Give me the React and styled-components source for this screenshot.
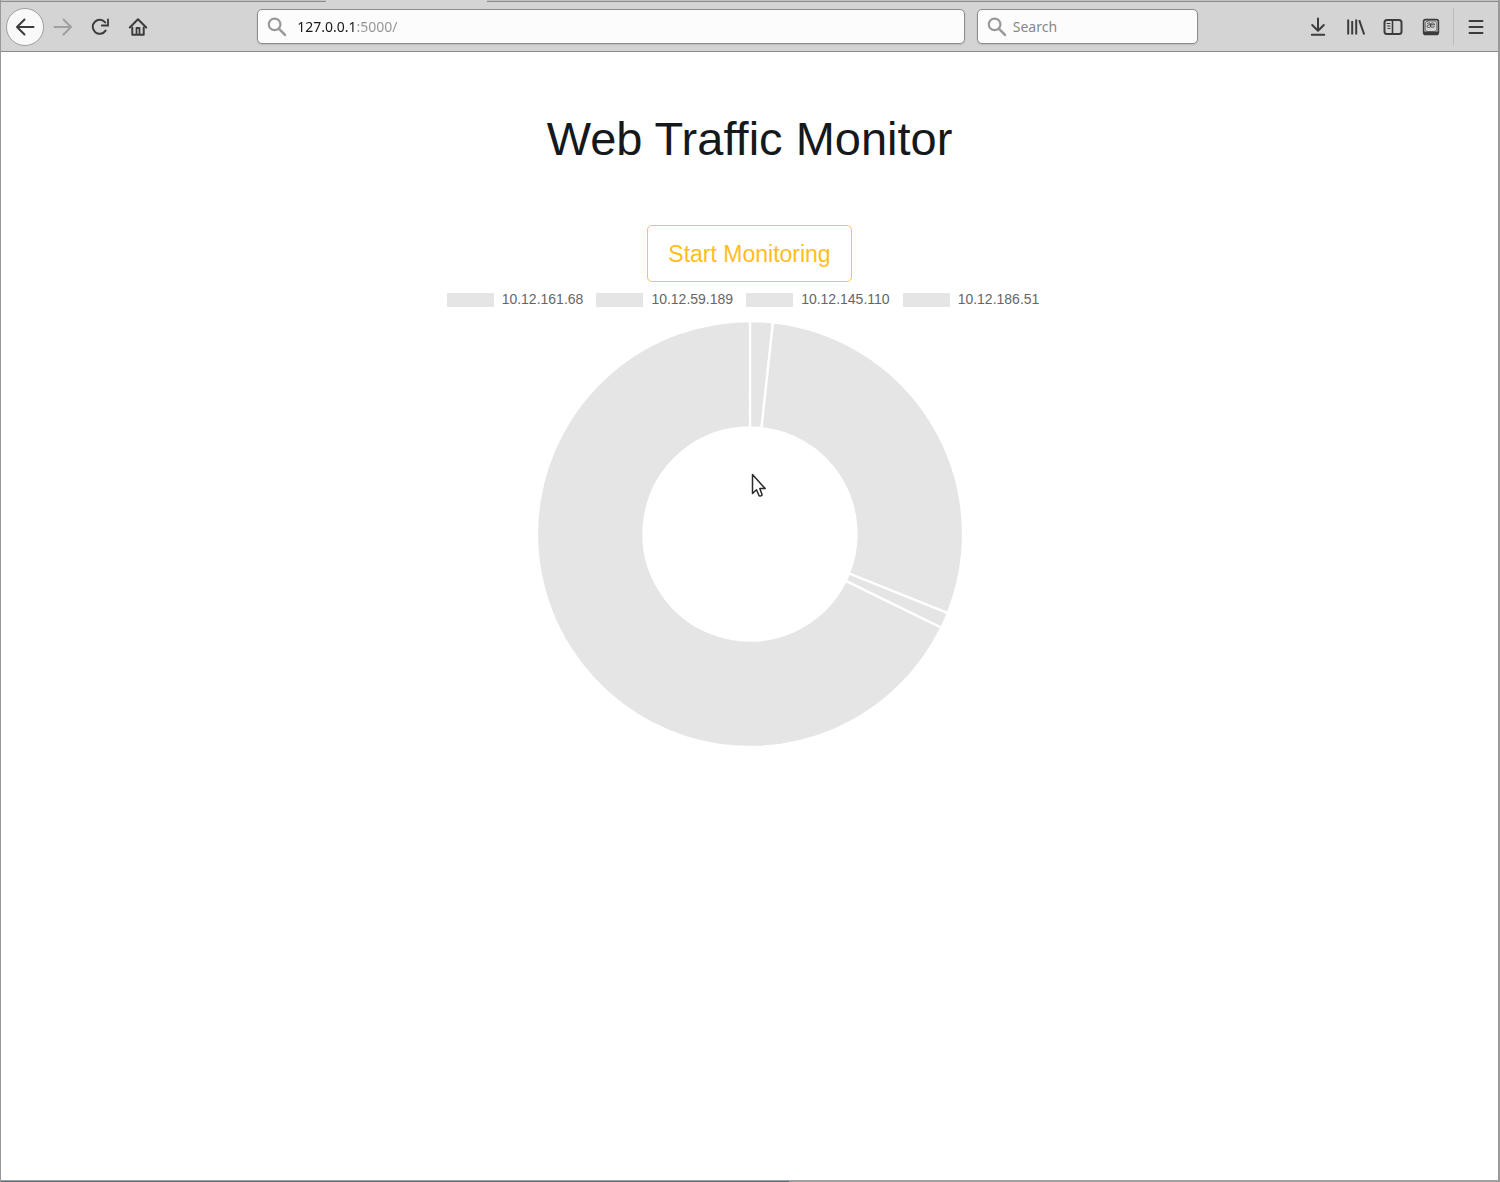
import React from "react";
import styled, { createGlobalStyle } from "styled-components";

const GlobalStyle = createGlobalStyle`
  * { box-sizing: border-box; }
  body { margin: 0; background: #fff; }
`;

const Window = styled.div`
  display: flex;
  flex-direction: column;
  min-height: 100vh;
  border-left: 1px solid #999;
  border-right: 2px solid #999;
  font-family: "Noto Sans", "Open Sans", sans-serif;
`;

const TabStrip = styled.div`
  display: flex;
  height: 2px;
  background: #d4d4d4;
`;

const TabEdge = styled.div`
  flex: ${(p) => (p.$width ? `0 0 ${p.$width}px` : "1")};
  background: ${(p) => (p.$active ? "#d4d4d4" : "#c4c4c4")};
  border-bottom: 1px solid ${(p) => (p.$active ? "#d4d4d4" : "#8c8c8c")};
`;

const Toolbar = styled.header`
  display: flex;
  align-items: center;
  height: 50px;
  padding: 0 4px 0 5px;
  background: #d4d4d4;
  border-bottom: 1px solid #8a8a8a;
`;

const ToolButton = styled.button`
  display: grid;
  place-items: center;
  flex: none;
  width: ${(p) => (p.$narrow ? 37 : 38)}px;
  height: 38px;
  padding: 0;
  border: 1px solid ${(p) => (p.$round ? "#a0a0a0" : "transparent")};
  border-radius: 50%;
  background: ${(p) => (p.$round ? "#f9f9f9" : "transparent")};
  color: ${(p) => (p.disabled ? "#a0a0a0" : "#3c3c3c")};
`;

const Spacer = styled.div`
  flex: 5 1 0;
`;

const Field = styled.label`
  display: flex;
  align-items: center;
  gap: ${(p) => (p.$width ? 6 : 10)}px;
  flex: ${(p) => (p.$width ? `0 0 ${p.$width}px` : "34 1 0")};
  min-width: 0;
  height: 35px;
  padding: 0 8px 0 9px;
  margin-right: ${(p) => (p.$width ? 0 : 12)}px;
  border: 1px solid #8c8c8c;
  border-radius: 5px;
  background: #fcfcfc;
  box-shadow: 0 1px 2px rgba(0, 0, 0, 0.12);
  color: #999;
`;

const FieldInput = styled.input`
  flex: 1;
  min-width: 0;
  height: 24px;
  padding: 0;
  border: 0;
  outline: 0;
  background: transparent;
  font: 14px/24px "Noto Sans", "Open Sans", sans-serif;
  color: #888;
  &::placeholder { color: #888; opacity: 1; }
`;

const AddressInput = styled(FieldInput)`
  background: linear-gradient(to right, #181818 59px, #929292 59px);
  background-clip: text;
  -webkit-text-fill-color: transparent;
`;

const Divider = styled.div`
  width: 1px;
  height: 37px;
  margin: 0 3px 0 4px;
  background: #bcbcbc;
`;

const Page = styled.main`
  display: flex;
  flex-direction: column;
  align-items: center;
  flex: 1;
  padding-top: 59px;
  background: #fff;
  font-family: "Liberation Sans", Arial, sans-serif;
`;

const Title = styled.h1`
  margin: 0;
  font-size: 47px;
  line-height: 56px;
  font-weight: 400;
  color: #16191c;
`;

const StartButton = styled.button`
  height: 57px;
  margin-top: 58px;
  padding: 0 20px;
  border: 1px solid #ffc04d;
  border-radius: 5px;
  background: #fff;
  color: #ffbe1a;
  font: 23px/34px "Liberation Sans", Arial, sans-serif;
`;

const Legend = styled.ul`
  display: flex;
  margin: 9px 0 0;
  padding: 0;
  list-style: none;
`;

const LegendItem = styled.li`
  display: flex;
  align-items: flex-start;
  gap: 8px;
  height: 18px;
  margin-right: 13px;
  font-size: 14px;
  line-height: 16px;
  color: #666;
`;

const Swatch = styled.span`
  width: 47px;
  height: 14px;
  margin-top: 2px;
  background: #e5e5e5;
`;

const Chart = styled.svg`
  display: block;
  margin-top: 12px;
  overflow: visible;
`;

const Pointer = styled.svg`
  position: absolute;
  left: calc(50% + 1px);
  top: 473px;
  pointer-events: none;
`;

const BottomEdge = styled.footer`
  display: flex;
  height: 2px;
  background: #a0a0a0;
`;

const Progress = styled.div`
  width: 788px;
  border-top: 1px solid #a0a0a0;
  background: #5a6f7c;
`;

const Icon = ({ size = 20, children, width = 2 }) => (
  <svg width={size} height={size} viewBox="0 0 20 20" fill="none" stroke="currentColor"
    strokeWidth={width} strokeLinecap="round" strokeLinejoin="round" aria-hidden="true">
    {children}
  </svg>
);

const SearchIcon = () => (
  <Icon width={2.2}>
    <circle cx="7.6" cy="7.4" r="5.8" />
    <path d="M11.8 11.6 18 17.8" strokeWidth="2.6" />
  </Icon>
);

const hosts = [
  { name: "10.12.161.68", end: 6.2 },
  { name: "10.12.59.189", end: 111.8 },
  { name: "10.12.145.110", end: 116.1 },
  { name: "10.12.186.51", end: 360 },
];

const point = (r, deg) => {
  const a = ((deg - 90) * Math.PI) / 180;
  return `${213 + r * Math.cos(a)} ${213 + r * Math.sin(a)}`;
};

const slice = (from, to) => {
  const large = to - from > 180 ? 1 : 0;
  return `M${point(213, from)}A213 213 0 ${large} 1 ${point(213, to)}L${point(106.5, to)}A106.5 106.5 0 ${large} 0 ${point(106.5, from)}Z`;
};

export default function App() {
  return (
    <Window>
      <GlobalStyle />
      <TabStrip>
        <TabEdge $width={325} />
        <TabEdge $active $width={161} />
        <TabEdge />
      </TabStrip>
      <Toolbar>
        <ToolButton $round aria-label="Back">
          <Icon><path d="M18.500 10H2M9.500 2.500 2 10l7.500 7.500" /></Icon>
        </ToolButton>
        <ToolButton disabled $narrow aria-label="Forward">
          <Icon><path d="M1.500 10H18M10.500 2.500 18 10l-7.500 7.500" /></Icon>
        </ToolButton>
        <ToolButton aria-label="Reload">
          <Icon>
            <path d="M15.600 13.600A7 7 0 1 1 15.300 5.500" />
            <path d="M18 2.300v6.200h-6.200" strokeWidth="1.800" strokeLinejoin="miter" />
          </Icon>
        </ToolButton>
        <ToolButton $narrow aria-label="Home">
          <Icon>
            <path d="M1.800 10.500 10 2.300l8.200 8.200" />
            <path d="M4.300 10.500V17.700h11.400V10.500" />
            <path d="M8.500 17v-6h3v6" strokeWidth="1.800" />
          </Icon>
        </ToolButton>
        <Spacer />
        <Field>
          <SearchIcon />
          <AddressInput aria-label="Address" defaultValue="127.0.0.1:5000/" />
        </Field>
        <Field $width={221}>
          <SearchIcon />
          <FieldInput aria-label="Search" placeholder="Search" />
        </Field>
        <Spacer />
        <ToolButton aria-label="Downloads">
          <Icon><path d="M10 1.500V13.500M4.200 8l5.800 5.800L15.800 8M3.800 17.800h12.400" /></Icon>
        </ToolButton>
        <ToolButton $narrow aria-label="Library">
          <Icon width={2}>
            <path d="M2.200 2.500v15M6.200 4v13.500M10.200 2.500v15M13.200 3.200 18.200 17.500" strokeLinecap="butt" />
          </Icon>
        </ToolButton>
        <ToolButton aria-label="Sidebar">
          <Icon>
            <rect x="1.500" y="3" width="17" height="14" rx="2.500" />
            <path d="M9.500 3v14" strokeWidth="1.600" />
            <path d="M4 6.500h3M4.500 9h2.500M5 11.500h2" strokeWidth="1" />
          </Icon>
        </ToolButton>
        <ToolButton $narrow aria-label="Dictionary">
          <Icon>
            <rect x="2.600" y="2.600" width="14.800" height="14.800" rx="2" strokeWidth="1.600" />
            <path d="M3 14.500h14v3H3z" fill="currentColor" stroke="none" />
            <rect x="4.300" y="4" width="11.400" height="10.500" rx="2.500" strokeWidth="0.600" />
            <path d="M6.500 6.400c1.200-.9 3-.6 3 .8v2.600c-1.200 1.200-3.500.8-3.500-.5 0-1.500 2-1.500 3.500-1.500h4c0-2.600-4-2.600-4 .2s2.500 2.600 3.800 1.600" strokeWidth="0.900" />
          </Icon>
        </ToolButton>
        <Divider />
        <ToolButton $narrow aria-label="Menu">
          <Icon><path d="M3.500 4h13M3.500 10h13M3.500 16h13" /></Icon>
        </ToolButton>
      </Toolbar>
      <Page>
        <Title>Web Traffic Monitor</Title>
        <StartButton>Start Monitoring</StartButton>
        <Legend>
          {hosts.map((h) => (
            <LegendItem key={h.name}>
              <Swatch />
              {h.name}
            </LegendItem>
          ))}
        </Legend>
        <Chart width="426" height="426" viewBox="0 0 426 426" role="img" aria-label="Traffic by host">
          {hosts.map((h, i) => (
            <path key={h.name} d={slice(i ? hosts[i - 1].end : 0, h.end === 360 ? 359.99 : h.end)}
              fill="#e5e5e5" stroke="#fff" strokeWidth="2.300" />
          ))}
        </Chart>
      </Page>
      <BottomEdge><Progress /></BottomEdge>
      <Pointer width="17" height="26" viewBox="0 0 17 26" aria-hidden="true">
        <path d="M1.500 1.500v19l4-3.800 2.600 6.100c.3.700 3.300-.2 3-1.100L8.800 15.600h5.400z"
          fill="#fff" stroke="#2b2b2f" strokeWidth="1.500" strokeLinejoin="round" />
      </Pointer>
    </Window>
  );
}
